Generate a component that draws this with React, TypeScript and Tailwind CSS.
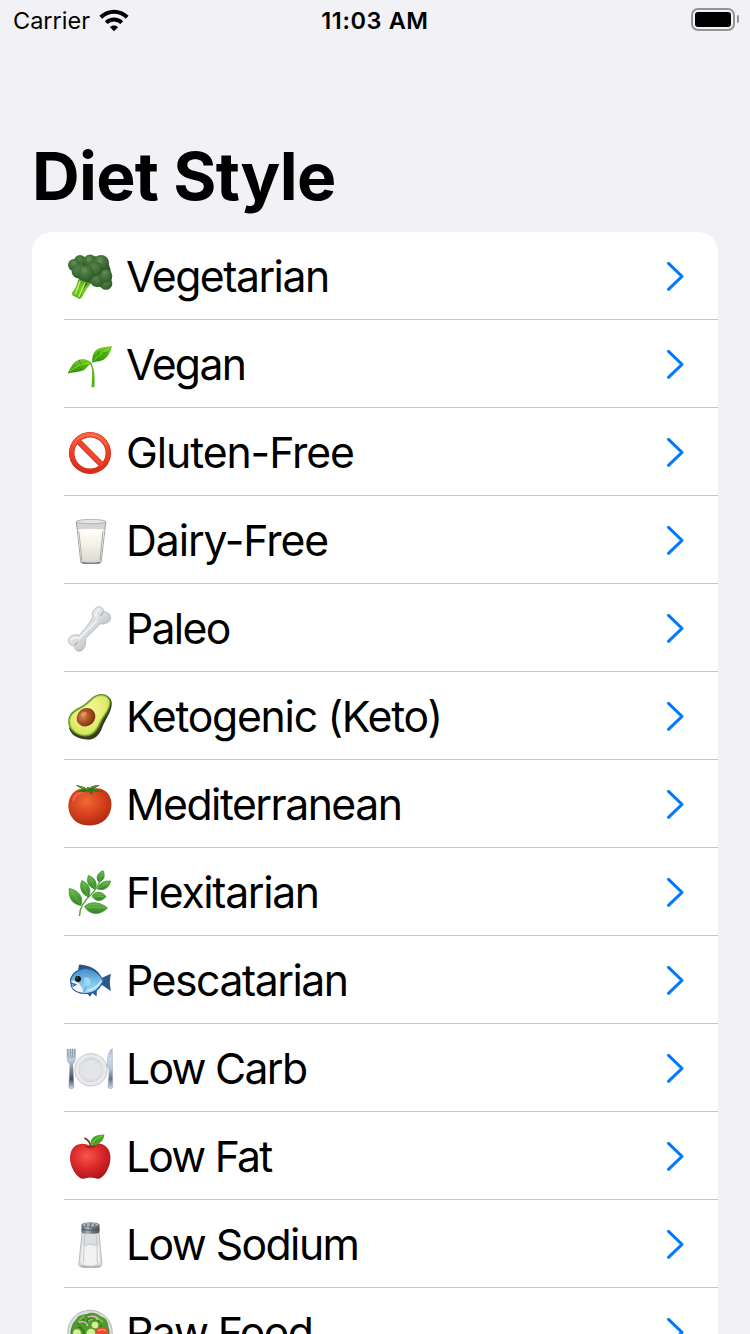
import React from "react";

function Defs({ id, stops, radial }: { id: string; stops: string[]; radial?: boolean }) {
  const s = stops.map((c, i) => <stop key={i} offset={i / (stops.length - 1)} stopColor={c} />);
  return (
    <defs>
      {radial ? (
        <radialGradient id={id} cx="0.42" cy="0.35" r="0.7">{s}</radialGradient>
      ) : (
        <linearGradient id={id} x1="0" y1="0" x2="0" y2="1">{s}</linearGradient>
      )}
    </defs>
  );
}

const broccoli = (
  <>
    <Defs id="bro" radial stops={["#588546", "#42703a", "#2d5526"]} />
    <Defs id="stem" stops={["#4c9a1e", "#7ccb2c", "#55b418"]} />
    <path d="M14 26L26 30C22 35 18 41 15.5 46L13.5 47L6.5 43.5L5.8 41C9 37 11.500 32 12 28Z" fill="url(#stem)" />
    <path d="M14 29L9.500 42M19 31L12.500 45" stroke="#c3ee6e" strokeWidth="1.3" fill="none" />
    <path d="M22 31L17 38L19.500 31Z" fill="#2f7a12" />
    <path d="M8 10C12 4 34 1 41 9C46 17 47 29 43 35C37 38 31 34 29 31C23 32 12 28 8 22Z" fill="#315b29" />
    <g fill="url(#bro)">
      <circle cx="40" cy="31.500" r="6.300" /><circle cx="31" cy="28" r="7" /><circle cx="39.500" cy="24" r="6.800" />
      <circle cx="14" cy="9" r="6" /><circle cx="24" cy="9" r="6.500" /><circle cx="35" cy="11" r="8" />
      <circle cx="8" cy="13" r="6" /><circle cx="13" cy="19" r="7.500" /><circle cx="29" cy="17" r="7.500" />
      <circle cx="20" cy="21.500" r="8" />
    </g>
    <g fill="#79a65c" opacity=".3">
      <circle cx="8" cy="11" r="2.500" /><circle cx="18" cy="18" r="3" /><circle cx="34" cy="8" r="3" />
      <circle cx="39" cy="20" r="2.500" /><circle cx="23" cy="7" r="2.500" />
    </g>
  </>
);

const sprout = (
  <>
    <Defs id="spr" stops={["#7ed321", "#4db010", "#2f8b0c"]} />
    <path d="M24.500 22C26.500 24 27.500 28 28.200 33C28.800 38 28.800 43 28.500 47L25.500 47.500C25.800 40 26.500 34 26 30C25.700 26 24.500 24 22 22.500Z" fill="#58b41c" />
    <path d="M26.300 22.800C25.500 14 29 9 35.500 7.500C39.500 6.700 43 7 46.300 6C44.500 11 43 16 38 19.500C34 22 29.500 21 26.300 22.800Z" fill="url(#spr)" />
    <path d="M25.800 23.600C22 18.500 15 17.500 9.500 21.500C5.500 24.500 4.500 29 1.600 33.500C6.500 32 12.500 32.500 17 30.500C21.500 28.500 22 24.500 25.800 23.600Z" fill="url(#spr)" />
    <path d="M27.500 21C32 15 37 12 43.500 8.500M23.500 23C16 23.500 10 26 4 31.500" stroke="#9be044" strokeWidth=".8" fill="none" />
    <path d="M32 16L33 11M36 13L41 13M15 24.500L13 20M12 26L15 29" stroke="#2c820d" strokeWidth=".7" fill="none" />
  </>
);

const prohibited = (
  <>
    <Defs id="pro" stops={["#ff5a3c", "#f03c22", "#d92f18"]} />
    <circle cx="24" cy="25" r="18.300" fill="none" stroke="#b9281a" strokeWidth="5.400" />
    <path d="M11.500 12.500L36.500 37.500" stroke="#c32c1b" strokeWidth="5.800" />
    <circle cx="24" cy="24.800" r="18.300" fill="none" stroke="url(#pro)" strokeWidth="4.400" />
    <path d="M11.500 12.200L36.500 37.200" stroke="#f2452b" strokeWidth="4.500" />
    <path d="M7.500 17A18.600 18.600 0 0 1 40.500 17" fill="none" stroke="#ff8b70" strokeWidth="1" opacity=".7" />
  </>
);

const milk = (
  <>
    <Defs id="mlk" stops={["#fffef8", "#f3f1e8", "#dedbd0"]} />
    <path d="M10.300 5.500L14.800 46C15 47.500 19 48 25 48S35 47.500 35.200 46L39.800 5.500Z" fill="#d2d5d4" stroke="#8c9190" strokeWidth=".8" />
    <path d="M11.700 14C16 12.500 34 12.500 38.300 14L35 43.500C32 45.500 18 45.500 15 43.500Z" fill="url(#mlk)" />
    <ellipse cx="25" cy="14.700" rx="13" ry="1.900" fill="#fffdf7" />
    <ellipse cx="25" cy="5.600" rx="14.700" ry="2.200" fill="#e3e6e5" stroke="#a2a7a6" strokeWidth=".8" />
    <path d="M12.800 15L16 44" stroke="#aeb2b0" strokeWidth="1" />
    <path d="M37 15L34 44" stroke="#a4a8a6" strokeWidth="1" />
    <path d="M16 46.300C21 47.600 29 47.600 34 46.300" stroke="#777c7b" strokeWidth="1.300" fill="none" />
  </>
);

const bone = (
  <>
    <defs>
      <linearGradient id="bon" x1="0" y1="0" x2="1" y2="1"><stop offset="0" stopColor="#f5f6f7" /><stop offset=".5" stopColor="#d9dcde" /><stop offset="1" stopColor="#8e9397" /></linearGradient>
    </defs>
    <path d="M26.500 13.500C25 8 29 2.500 33.500 2.700C37 3 37.500 5.500 37.300 7.800C41 7.500 44.700 9.800 44.600 13.800C44.400 18.500 38.500 20.800 34.500 19.800L19.500 34.500C20.500 39 18.500 47 13.500 47.300C9.500 47.400 8.500 44.500 8.600 41.500C5 42 2.300 39.500 2.500 36C2.900 31.500 8.500 30 13 31.200C18 26 23 20 26.500 13.500Z" fill="url(#bon)" stroke="#9da2a6" strokeWidth=".6" />
    <path d="M30.500 14C29 10 31 6 33.500 5.500M14 33.500L30.500 17M5 35.500C7 33 10 33 13 34.500" stroke="#fff" strokeWidth="2" opacity=".55" fill="none" strokeLinecap="round" />
    <path d="M37 8.500L35 11.500M9 41L11.500 38" stroke="#92979b" strokeWidth="1" fill="none" strokeLinecap="round" />
  </>
);

const avocado = (
  <>
    <Defs id="avo" radial stops={["#f7f6a0", "#eaf07c", "#cfe35a"]} />
    <Defs id="pit" radial stops={["#d98a4c", "#a5501f", "#6e2e10"]} />
    <path d="M33 2.500C39 1.500 46 5 45.800 12C45.500 20 39 28 36 36C33 44.500 27 48.500 20 47.500C11 46.500 5 43 3 36Z" fill="#3d3a22" />
    <path d="M33 2.500C39.500 1 44.800 4.500 44.700 10.500C44.500 18 38 24.500 35 31C31.500 40 25.500 45.500 17.500 44.500C8 43.200 1.500 36.500 2.200 28.500C3 20 9.500 17.500 16.500 13.500C23 9.500 26 3.500 33 2.500Z" fill="#5e9a26" />
    <path d="M33.300 4C38.500 3 43.200 6 43.100 10.700C42.900 17.500 36.500 23.500 33.500 30C30 38.500 25 43.500 17.500 42.800C9.500 41.800 3.500 36 4 28.500C4.600 21.500 11 18.800 17.500 15C24 11 27 5 33.300 4Z" fill="url(#avo)" stroke="#b8d843" strokeWidth="1" />
    <ellipse cx="20" cy="25.300" rx="9.800" ry="8.800" transform="rotate(-40 20 25.300)" fill="url(#pit)" />
    <ellipse cx="17.800" cy="22" rx="3" ry="2" fill="#f2bb8a" opacity=".5" transform="rotate(-25 17.800 22)" />
  </>
);

const tomato = (
  <>
    <Defs id="tom" radial stops={["#ee6a38", "#d9431e", "#a62a10"]} />
    <path d="M24 9.500C30 7 38 8.500 42 13.500C46.500 19.500 46.500 28 43 34.500C39 42 32 45.500 23.500 45.500C14 45.500 7 41 4 34C1 27 2 18.500 7 13C11.500 8.200 18 7.500 24 9.500Z" fill="url(#tom)" />
    <path d="M7 20C9 15 12.500 12.500 17 12.500" stroke="#ffab80" strokeWidth="2" opacity=".35" fill="none" strokeLinecap="round" />
    <path d="M9.500 5C14 5.500 18.500 6.500 21 8.500L21.500 6.500L24 8C26 6 29 4.300 33.500 5.300C31 7 29 8 27.500 9.300C31 9.700 35 10.500 37.500 12.500C33 12 29.500 11.800 26.500 11.300C26.500 13 26.500 14 25.500 15.500C24.500 13.500 23.500 12 21.500 11.500C17.500 12.300 14 12.500 10 11.500C13 11 15.500 10 17 9C14.500 8 11.500 7 9.500 5Z" fill="#37731d" />
    <path d="M11 5.500L22 9.500L24 7.500L32 5.700" stroke="#60a133" strokeWidth="1" fill="none" />
  </>
);

const herb = (
  <>
    <Defs id="hrb" stops={["#6fbf4b", "#4a9e35", "#337f2a"]} />
    <path d="M13.500 47.500C13.500 38 20 31 26 25.500C30 21.500 32 17.500 34 13" stroke="#64a947" strokeWidth="1.600" fill="none" strokeLinecap="round" />
    <g fill="url(#hrb)" stroke="#3f9130" strokeWidth=".8" strokeLinejoin="round">
      <path d="M15 37.500C6 36 2.500 30 3.200 20.500C12 22 18 28.500 15 37.500Z" />
      <path d="M22.500 29C15 26 13 19 15.800 12.500C22.500 15.500 26 21.500 22.500 29Z" />
      <path d="M29 21C22 19 20 13 22.500 7.500C29 10 32 15 29 21Z" />
      <path d="M33 14C29.500 10.500 31 5 37 2.700C39.500 8 38 12.500 33 14Z" />
      <path d="M31.500 21C33.500 14.500 38.500 12.500 44.700 13.200C43 20 37.500 23 31.500 21Z" />
      <path d="M26 28C29.500 22.500 35.500 23 40 28.500C36 34 29.500 34 26 28Z" />
      <path d="M18.500 38.500C23.500 33 34 33.500 41.500 40C33.500 48 23.500 47 18.500 38.500Z" />
    </g>
    <path d="M14.500 36.500L6 24M22 28L17 16M28.500 20L24 10.500M33.500 13L36 6M32.500 20.500L42 15M27 28.200L38 28.500M20 39L39 40" stroke="#84c862" strokeWidth=".5" fill="none" />
  </>
);

const fish = (
  <>
    <Defs id="fsh" stops={["#4389c4", "#78bdeb", "#a7daf4"]} />
    <path d="M12 13.500C13 10.500 12.500 9 13.500 8.500C20 9 27 11 32 16L36 22Z" fill="#28538a" />
    <path d="M20 36L24 40.800L26.500 37L30.500 40.500L31 34Z" fill="#2b5a93" />
    <path d="M35 22.500C39 20.500 42 18.500 45 18C43.500 23 43.500 29 45 35C41.500 33.500 38.500 30 35 28.500Z" fill="#2b588f" />
    <path d="M4.500 24C6.500 16.500 13 12.500 20 12.500C28 12.500 33 17.500 37.500 24.500C34 32.500 28 37.500 20.500 37.500C12 37.500 7 34 5.500 30.500Z" fill="url(#fsh)" stroke="#275c98" strokeWidth="1.200" />
    <path d="M5 25.500C9 23 15 27 17.500 36.500C12 36.500 7.500 33.500 5.700 30.500L8.500 29Z" fill="#eef3f5" />
    <path d="M17 14C23 20 22.500 29 17.500 36" stroke="#5fa3d6" strokeWidth="1.200" fill="none" />
    <path d="M21.500 34.500C27 33.500 32 30 35.500 25" stroke="#d0effb" strokeWidth="1.500" fill="none" />
    <path d="M18 22C22 20 25 23 25 28C22 31 19.500 31 18.500 30Z" fill="#9cd4f3" />
    <path d="M4.500 27L9.500 28.500L6.500 30.500" stroke="#3658a5" strokeWidth="1.300" fill="none" />
    <circle cx="12" cy="23" r="3" fill="#111" /><circle cx="11.200" cy="22" r=".5" fill="#fff" />
  </>
);

const plate = (
  <>
    <Defs id="plt" stops={["#dadcdf", "#f4f4f5", "#e2e3e5"]} />
    <Defs id="met" stops={["#8496ab", "#c6d5e5", "#85909e", "#444c57", "#c5dcf5"]} />
    <Defs id="knf" stops={["#a9c0da", "#c9daeb", "#b4c7dc", "#68727e", "#c5dcf5"]} />
    <circle cx="25" cy="25.800" r="16.300" fill="#e9eaec" stroke="#bcbfc3" strokeWidth=".8" />
    <circle cx="25" cy="25.800" r="12" fill="url(#plt)" stroke="#d0d2d5" strokeWidth="1" />
    <circle cx="25" cy="26" r="10.300" fill="#e4e5e7" stroke="#c9cbce" strokeWidth=".5" />
    <path d="M1.300 5L2.200 5L2.800 14L3.600 14L3.900 5L4.800 5L5 14L5.700 14L6 5L6.900 5L7.100 14L7.700 14L8.300 5L9.200 5C9.500 12 10 18 6.800 20L7.800 43C7.700 45.300 3 45.300 2.900 43L4 20C.5 18 1 12 1.300 5Z" fill="url(#met)" stroke="#6a7685" strokeWidth=".4" />
    <path d="M46.300 4.800C42.500 6 41.300 14 41.300 22L43.200 26L42 43.500C42.200 45 46.500 45 46.700 43.500Z" fill="url(#knf)" stroke="#8795a5" strokeWidth=".4" />
  </>
);

const apple = (
  <>
    <Defs id="apl" radial stops={["#f5564a", "#dd2a2c", "#a9131b"]} />
    <path d="M24.500 14C30 10.500 36 11 40 14.500C44.500 18.500 45.500 26 43.500 32.500C41.500 39 37.500 46 32.500 46.700C29.500 47 28 45.500 24.500 45.500S19.500 47 16.500 46.700C11.500 46 7 39 5 32.500C3 26 4 18.500 8.500 14.500C12.500 11 19 11 24.500 14Z" fill="url(#apl)" />
    <path d="M18 14.500C21.500 17 27 17 30.500 14.500C27 13.500 22 13.500 18 14.500Z" fill="#a11419" opacity=".6" />
    <path d="M24.800 15C24.500 11 22.500 8 18.500 6" stroke="#6b3c24" strokeWidth="1.800" fill="none" />
    <path d="M24.800 12.500C24 6.500 28 2.500 38.500 2.500C37.500 9 33 14.500 24.800 12.500Z" fill="#49a526" />
    <path d="M26 11.500C28 8 32 5.500 36.500 3.800" stroke="#8bd255" strokeWidth=".9" fill="none" />
  </>
);

const salt = (
  <>
    <defs>
      <linearGradient id="cap"><stop offset="0" stopColor="#5e666c" /><stop offset=".35" stopColor="#aab3b9" /><stop offset=".6" stopColor="#70787e" /><stop offset="1" stopColor="#4c5358" /></linearGradient>
    </defs>
    <path d="M16 13L12.800 44C13 46.500 15 47.700 17.500 47.700H31.500C34 47.700 35.800 46.500 36 44L33 13Z" fill="#dcdfe0" stroke="#aeb2b4" strokeWidth=".8" />
    <path d="M16.500 25L33 25L33.800 42L28.500 45H20L14.800 42Z" fill="#f2f2f0" />
    <path d="M19 14L18 26L17.500 43M30 14L31 26L31.300 43M18 26L24.500 24L31 26" stroke="#c1c5c7" strokeWidth=".9" fill="none" />
    <path d="M14.500 45.500C20 47.500 29 47.500 34.500 45.500" stroke="#a5a9ab" strokeWidth="1.200" fill="none" />
    <path d="M15.500 5C15.500 2 33.500 2 33.500 5V12.500C31 14.300 18 14.300 15.500 12.500Z" fill="url(#cap)" />
    <ellipse cx="24.500" cy="4.800" rx="8.600" ry="2.100" fill="#a8b9c5" stroke="#5c666e" strokeWidth=".5" />
    <path d="M19.500 5H21M24 4H25.500M28 5H29.500M23.500 6H25" stroke="#273b4b" strokeWidth="1" />
    <path d="M15.500 9C20 10.800 29 10.800 33.500 9" stroke="#3f474d" strokeWidth=".8" fill="none" />
  </>
);

const salad = (
  <>
    <circle cx="24" cy="24.500" r="22.300" fill="#d9dde0" stroke="#a5abb0" strokeWidth=".8" />
    <circle cx="24" cy="25.500" r="19.500" fill="#3f8522" />
    <path d="M10 12C12 6 18 7 21 6C26 3 32 6 36 9C41 10 43 16 42 22L30 24L8 25C5 21 5 16 10 12Z" fill="#51992c" />
    <path d="M12 17L16 10L20 16L24 8L29 14L36 12M8 22L14 19L19 25M27 19L36 18" stroke="#32751b" strokeWidth="1.600" fill="none" />
    <path d="M12 14L18 8M29 8L37 14M22 13L27 11" stroke="#81c34d" strokeWidth="1.700" />
    <path d="M13 15C16 12 21 14 21.500 18M22 9C27 7 31 9 31.500 12" stroke="#e7b5ce" strokeWidth="1.500" fill="none" />
    <g fill="#d9ec9a" stroke="#5c9f29" strokeWidth="1.300">
      <circle cx="29" cy="17" r="4" /><circle cx="25" cy="25" r="5" /><circle cx="11" cy="25" r="4.500" />
    </g>
    <ellipse cx="36" cy="24" rx="6.500" ry="5" fill="#e54b30" />
    <path d="M32 23C34 21 38 21 40 23" stroke="#ff9170" strokeWidth="1.300" fill="none" />
  </>
);

const diets = [
  { icon: broccoli, name: "Vegetarian", tracking: "tracking-[-1.5px]" },
  { icon: sprout, name: "Vegan", tracking: "tracking-[-1.65px]" },
  { icon: prohibited, name: "Gluten-Free", tracking: "tracking-[-1.08px]" },
  { icon: milk, name: "Dairy-Free", tracking: "tracking-[-1.07px]" },
  { icon: bone, name: "Paleo", tracking: "tracking-[-1.7px]" },
  { icon: avocado, name: "Ketogenic (Keto)", tracking: "tracking-[-1.25px]" },
  { icon: tomato, name: "Mediterranean", tracking: "tracking-[-1.5px]" },
  { icon: herb, name: "Flexitarian", tracking: "tracking-[-1.35px]" },
  { icon: fish, name: "Pescatarian", tracking: "tracking-[-1.46px]" },
  { icon: plate, name: "Low Carb", tracking: "tracking-[-1.7px]" },
  { icon: apple, name: "Low Fat", tracking: "tracking-[-1.8px]" },
  { icon: salt, name: "Low Sodium", tracking: "tracking-[-1.56px]" },
  { icon: salad, name: "Raw Food", tracking: "tracking-[-1.6px]" },
];

function StatusBar() {
  return (
    <header className="grid h-10 shrink-0 grid-cols-3 items-center pl-[13px] text-[23.5px] leading-[38px]">
      <div className="flex items-center gap-[9px]">
        <span className="pt-0.5">Carrier</span>
        <svg width="30" height="23" viewBox="0 0 30 23" fill="none" stroke="#000">
          <path d="M1.800 8.200C9.500 .9 20.500 .9 28.200 8.200" strokeWidth="4.200" />
          <path d="M7.200 13.600C11.700 9.400 18.300 9.400 22.800 13.600" strokeWidth="4" />
          <path d="M15 22.200L10.800 18C13.300 15.900 16.700 15.900 19.200 18Z" fill="#000" stroke="none" />
        </svg>
      </div>
      <div className="-ml-[13px] pt-0.5 text-center font-semibold tracking-[0.6px]">11:03 AM</div>
      <div className="flex items-center justify-end gap-0.5 pr-[11px] pb-0.5">
        <div className="h-[23px] w-11 rounded-[7px] border-2 border-[#949396] p-0.5">
          <div className="h-[15px] w-9 rounded-[3px] bg-black" />
        </div>
        <div className="h-2 w-0.5 rounded-r-full bg-[#949396]" />
      </div>
    </header>
  );
}

export default function App() {
  return (
    <main className="flex h-[1334px] w-[750px] flex-col overflow-hidden bg-[#f2f1f6] font-['Inter',sans-serif] text-black">
      <StatusBar />
      <h1 className="mt-24 shrink-0 pl-8 text-[66px] leading-20 font-bold tracking-[-0.7px]">Diet Style</h1>
      <ul className="mx-8 mt-4 shrink-0 rounded-t-[20px] bg-white">
        {diets.map((d) => (
          <li key={d.name} className="pl-8">
            <button className="flex h-22 w-full items-center border-b border-[#c6c6c8] pr-[34px] pl-0.5 text-left">
              <svg className="shrink-0" width="48" height="48" viewBox="0 0 48 48">{d.icon}</svg>
              <span className={`ml-3 flex-1 pt-px text-[42.7px] leading-[85px] whitespace-nowrap ${d.tracking}`}>{d.name}</span>
              <svg width="18" height="30" viewBox="0 0 18 30" fill="none">
                <path d="M2.500 2.300L16 15.300L2.500 28.300" stroke="#007aff" strokeWidth="3" strokeLinecap="round" strokeLinejoin="round" />
              </svg>
            </button>
          </li>
        ))}
      </ul>
    </main>
  );
}
